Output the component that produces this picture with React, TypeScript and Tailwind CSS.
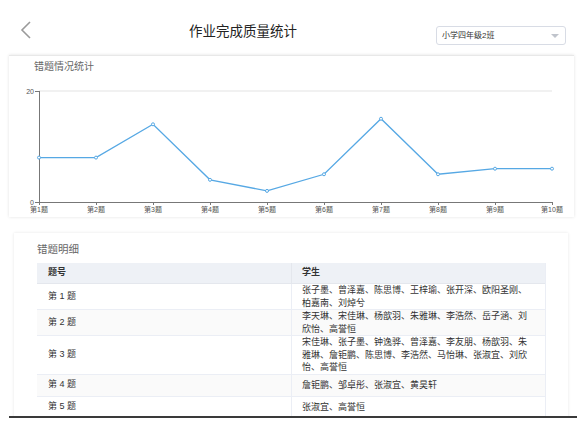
import React from "react";

const data = [8, 8, 14, 4, 2, 5, 15, 5, 6, 6];

const rows: { q: string; lines: string[]; striped?: boolean }[] = [
  { q: "第 1 题", lines: ["张子墨、曾泽嘉、陈思博、王梓瑜、张开深、欧阳圣刚、", "柏嘉南、刘焯兮"] },
  { q: "第 2 题", lines: ["李天琳、宋佳琳、杨歆羽、朱雅琳、李浩然、岳子涵、刘", "欣怡、高誉恒"], striped: true },
  {
    q: "第 3 题",
    lines: [
      "宋佳琳、张子墨、钟逸骅、曾泽嘉、李友朋、杨歆羽、朱",
      "雅琳、詹钜鹏、陈思博、李浩然、马怡琳、张淑宜、刘欣",
      "怡、高誉恒",
    ],
  },
  { q: "第 4 题", lines: ["詹钜鹏、邹卓彤、张淑宜、黄昊轩"], striped: true },
  { q: "第 5 题", lines: ["张淑宜、高誉恒"] },
];

function Chart() {
  const xs = data.map((_, i) => 30 + 57 * i);
  const ys = data.map((v) => 129 - v * 5.55);
  const pts = xs.map((x, i) => `${x},${ys[i]}`).join(" ");
  return (
    <svg width="565" height="144" viewBox="0 0 565 144" className="block">
      <line x1="30" y1="18" x2="543" y2="18" stroke="#e3e3e3" strokeWidth="1" />
      <line x1="30.5" y1="18" x2="30.5" y2="129" stroke="#777" strokeWidth="1" />
      <line x1="26" y1="18.5" x2="30" y2="18.5" stroke="#777" strokeWidth="1" />
      <line x1="26" y1="129.5" x2="30" y2="129.5" stroke="#777" strokeWidth="1" />
      <line x1="30" y1="129.5" x2="544" y2="129.5" stroke="#777" strokeWidth="1" />
      {xs.map((x, i) => (
        <line key={"t" + i} x1={x + 0.5} y1="129" x2={x + 0.5} y2="132" stroke="#777" strokeWidth="1" />
      ))}
      <text x="25" y="21" fontSize="7" fill="#555" textAnchor="end">20</text>
      <text x="25" y="132" fontSize="7" fill="#555" textAnchor="end">0</text>
      {xs.map((x, i) => (
        <text key={"l" + i} x={x} y="139" fontSize="7" fill="#555" textAnchor="middle">
          {`第${i + 1}题`}
        </text>
      ))}
      <polyline points={pts} fill="none" stroke="#56a8e4" strokeWidth="1.3" />
      {xs.map((x, i) => (
        <circle key={"c" + i} cx={x} cy={ys[i]} r="1.5" fill="#fff" stroke="#56a8e4" strokeWidth="1" />
      ))}
    </svg>
  );
}

export default function App() {
  return (
    <div
      className="relative w-[583px] h-[423px] overflow-hidden bg-white"
      style={{ fontFamily: '"Liberation Sans", "Noto Sans CJK SC", sans-serif' }}
    >
      {/* header */}
      <div className="relative h-[55px] flex items-center">
        <div className="absolute left-[18px] top-[20px]">
          <svg width="16" height="20" viewBox="0 0 16 20">
            <path d="M12 2 L4 10 L12 18" fill="none" stroke="#9a9a9a" strokeWidth="1.6" />
          </svg>
        </div>
        <div className="ml-[189px] text-[13.5px] leading-[20px] text-[#222] mt-[9px]">作业完成质量统计</div>
        <div className="absolute left-[436px] top-[26px] w-[130px] h-[19px] rounded-[3px] border border-[#d8dce5] flex items-center pl-[5px] pr-[6px]">
          <span className="text-[8px] text-[#333] leading-none">小学四年级2班</span>
          <span className="ml-auto w-0 h-0 border-l-[4px] border-r-[4px] border-t-[4px] border-l-transparent border-r-transparent border-t-[#c0c4cc]" />
        </div>
      </div>

      {/* chart card */}
      <div className="ml-[9px] w-[565px] h-[162px] bg-white border-t border-[#e8e8e8] shadow-[0_0_3px_rgba(0,0,0,0.12)]">
        <div className="pl-[25px] pt-[5px] text-[10px] leading-[12px] text-[#666]">错题情况统计</div>
        <Chart />
      </div>

      {/* table card */}
      <div className="ml-[14px] mt-[16px] w-[554px] bg-white shadow-[0_0_3px_rgba(0,0,0,0.1)] pl-[23px] pt-[9px] pb-[10px]">
        <div className="text-[10.5px] leading-[14px] text-[#666] mb-[7px]">错题明细</div>
        <div className="w-[509px] border-r border-[#ebeef5] text-[9px] text-[#333]">
          <div className="flex h-[21px] bg-[#eef1f6] border-b border-[#e4e7ed] font-bold">
            <div className="w-[255px] border-r border-[#e4e7ed] pl-[11px] flex items-center">题号</div>
            <div className="flex-1 pl-[10px] flex items-center">学生</div>
          </div>
          {rows.map((r) => (
            <div
              key={r.q}
              className={`flex min-h-[22px] border-b border-[#ebeef5] ${r.striped ? "bg-[#fafafa]" : "bg-white"}`}
            >
              <div className="w-[255px] border-r border-[#ebeef5] pl-[11px] flex items-center">{r.q}</div>
              <div className="flex-1 pl-[10px] flex flex-col justify-center leading-[12.5px] whitespace-nowrap">
                {r.lines.map((l, i) => (
                  <div key={i}>{l}</div>
                ))}
              </div>
            </div>
          ))}
        </div>
      </div>

      {/* bottom overlay edge */}
      <div className="absolute left-[9px] top-[416px] w-[568px] h-[2px] bg-[#3a3a3a]" />
      <div className="absolute left-0 top-[418px] w-[583px] h-[5px] bg-white" />
    </div>
  );
}
